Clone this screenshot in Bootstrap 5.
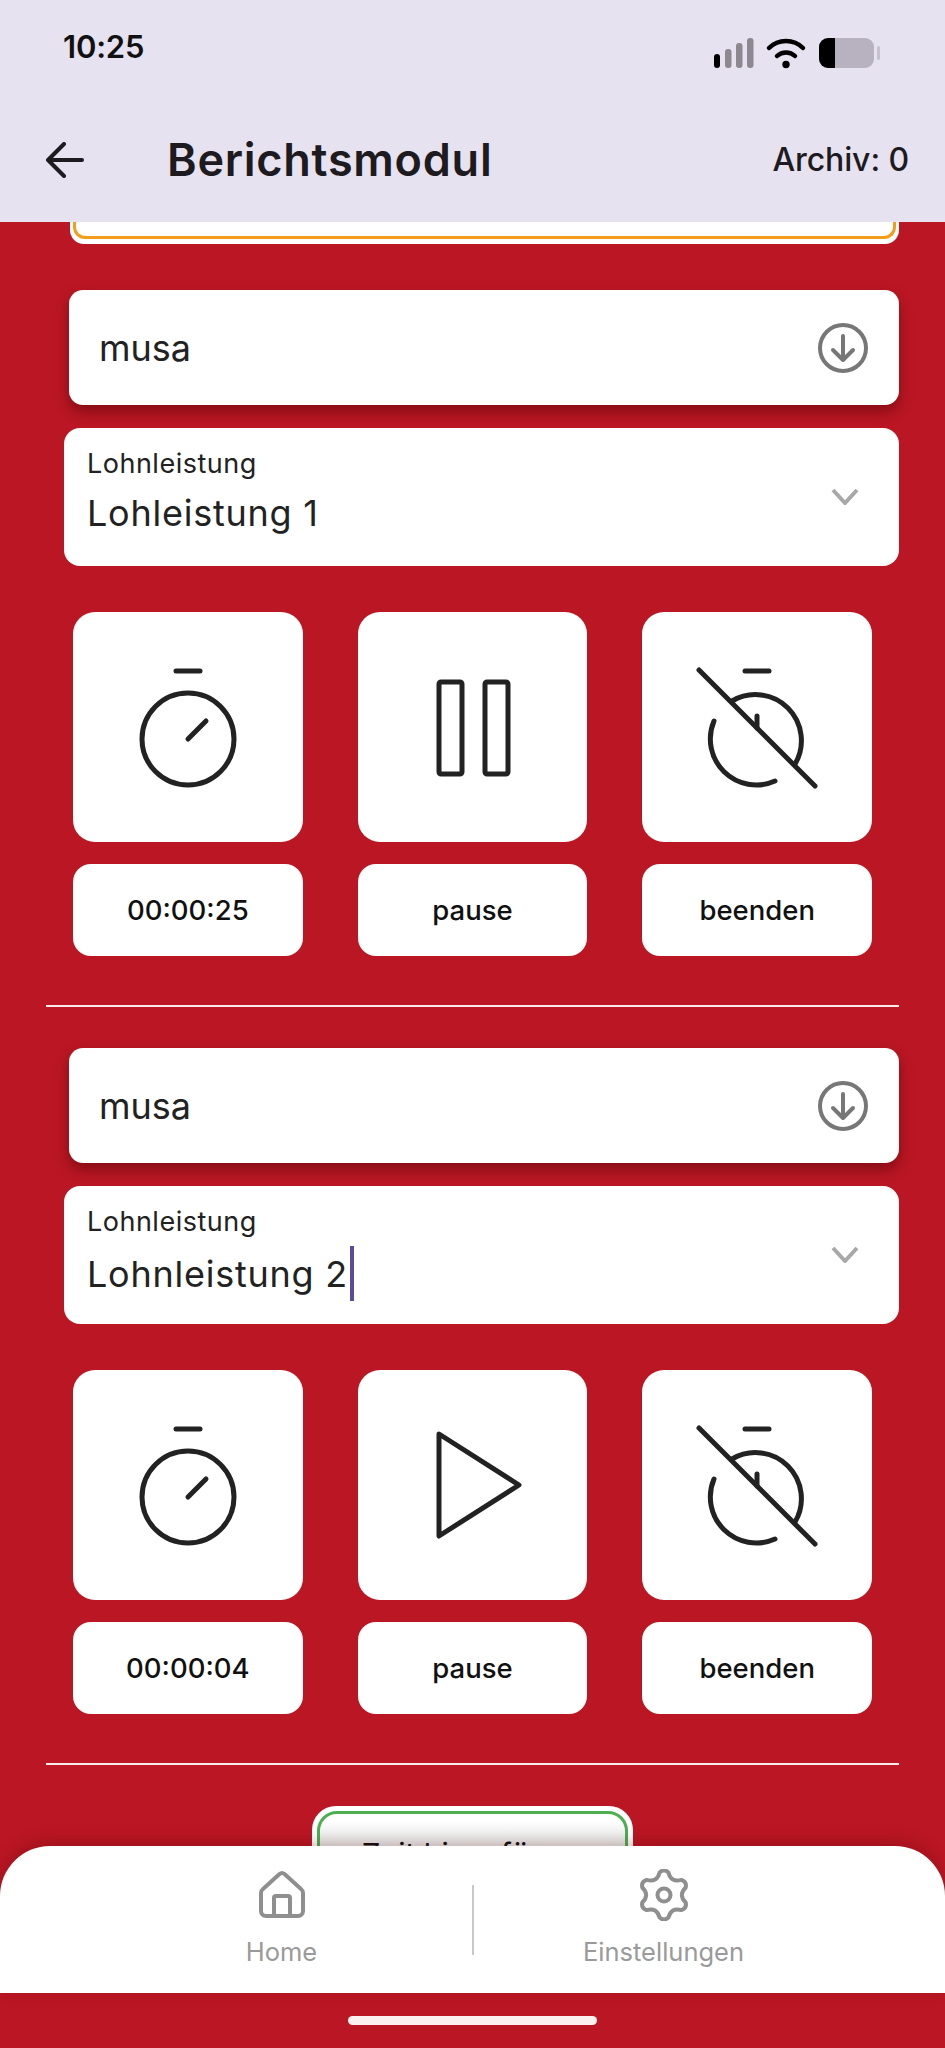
<!DOCTYPE html>
<html lang="de">
<head>
<meta charset="utf-8">
<title>Berichtsmodul</title>
<link href="https://cdn.jsdelivr.net/npm/bootstrap@5.3.0/dist/css/bootstrap.min.css" rel="stylesheet">
<style>
html,body{margin:0;background:#bb1623}
body{font-family:"Inter","Liberation Sans",sans-serif;color:#1d1b20}
.phone{width:945px;height:2048px;background:#bb1623}
.top-area{height:222px;background:#e7e2f0;flex:none}
.status-row{height:78px;padding:0 65px 0 63px}
.status-time{font-size:31px;font-weight:600;color:#111;letter-spacing:-.2px}
.tool-row{height:144px;padding:20px 36px 0 46px}
.back-btn{width:38px;height:36px;margin-right:83px;flex:none}
.page-title{font-size:45px;font-weight:600;letter-spacing:.75px;margin:0}
.archive-text{font-size:32px;font-weight:500;letter-spacing:-.1px}
.main-area{flex:1 1 auto;padding:0 46px;min-height:0;overflow:hidden}
.orange-box{height:22px;margin:0 0 46px 24px;background:#fff;border-radius:0 0 14px 14px;padding:0 3px 5px;}
.orange-inner{height:100%;background:#fff;border:solid #f29d1b;border-width:0 3px 3px;border-radius:0 0 12px 12px}
.person-card{height:115px;margin:0 0 23px 23px;padding:0 30px 0 30px;background:#fff;border-radius:14px;box-shadow:0 7px 14px rgba(60,0,0,.42);font-size:36px;color:#222}
.service-card{height:138px;margin:0 0 46px 18px;padding:22px 32px 0 23px;background:#fff;border-radius:16px;position:relative;color:#222}
.service-label{font-size:27px;line-height:28px;letter-spacing:.5px}
.service-value{font-size:36px;line-height:50px;margin-top:10px;letter-spacing:.75px;display:flex;align-items:center}
.text-caret{width:4px;height:55px;background:#5b4a9e;margin-left:2px;flex:none}
.chev{position:absolute;right:40px;top:60px}
.tile-row{margin:0 27px 22px;gap:55px}
.tile-row.caption-row{margin:0 27px}
.tile-box{flex:1 1 0;height:230px;background:#fff;border-radius:22px;border:0;padding:0}
.label-box{flex:1 1 0;height:92px;background:#fff;border-radius:18px;border:0;padding:2px 0 0;font-size:27.500px;font-weight:500;color:#111}
.rule-line{height:2px;margin:49px 0 41px;background:#fbeaea;opacity:1;border:0}
.add-box{width:321px;height:110px;margin:0 auto;background:#fff;border-radius:24px;padding:5px}
.add-inner{height:100%;border:3px solid #4caf50;border-radius:20px;text-align:center;font-size:30px;padding-top:18px;color:#111;background:linear-gradient(#fff 6px,#e8e8e8 32px);white-space:nowrap}
.bottom-nav{position:absolute;left:0;right:0;top:1846px;height:147px;background:#fff;border-radius:50px 50px 0 0;box-shadow:0 -4px 16px rgba(70,0,0,.25)}
.nav-cell{width:380px;color:#9a9a9a;font-size:25.500px;line-height:30px;padding-top:23px;gap:16px}
.nav-sep{width:2px;height:70px;background:#c8c8c8;margin-top:39px;flex:none}
.home-bar{position:absolute;left:348px;top:2016px;width:249px;height:9px;background:#fdf0f0;border-radius:5px}
.stroke-icon{fill:none;stroke:#222;stroke-width:5;stroke-linecap:round;stroke-linejoin:round}
</style>
</head>
<body>
<div class="phone d-flex flex-column position-relative overflow-hidden">
  <header class="top-area">
    <div class="status-row d-flex align-items-end justify-content-between pb-2">
      <span class="status-time">10:25</span>
      <svg width="170" height="34" viewBox="0 0 170 34" aria-hidden="true">
        <g transform="translate(0,2)">
          <rect x="4" y="16" width="6" height="14" rx="3" fill="#000"/>
          <rect x="15" y="11" width="6.500" height="19" rx="3" fill="#8d8790"/>
          <rect x="26" y="5" width="6.500" height="25" rx="3" fill="#8d8790"/>
          <rect x="37" y="0" width="6.500" height="30" rx="3" fill="#8d8790"/>
          <g fill="none" stroke="#000" stroke-linecap="round">
            <path d="M59 10 a24 24 0 0 1 34 0" stroke-width="4.500"/>
            <path d="M67 18 a13 13 0 0 1 18 0" stroke-width="4.500"/>
          </g>
          <circle cx="76" cy="26.500" r="3.700" fill="#000"/>
          <rect x="109" y="0" width="55" height="30" rx="9" fill="#b8b2c0"/>
          <path d="M125 0 h-7 a9 9 0 0 0 -9 9 v12 a9 9 0 0 0 9 9 h7 z" fill="#000"/>
          <rect x="167" y="8" width="3" height="14" rx="1.500" fill="#c7c1cf"/>
        </g>
      </svg>
    </div>
    <div class="tool-row d-flex align-items-center">
      <svg class="back-btn" viewBox="0 0 38 36" aria-hidden="true"><path d="M36 18H3M18 2 2 18l16 16" fill="none" stroke="#1d1b20" stroke-width="4" stroke-linecap="round" stroke-linejoin="round"/></svg>
      <h1 class="page-title">Berichtsmodul</h1>
      <span class="archive-text ms-auto">Archiv: 0</span>
    </div>
  </header>

  <main class="main-area">
    <div class="orange-box"><div class="orange-inner"></div></div>

    <section>
      <div class="person-card d-flex align-items-center justify-content-between">
        <span>musa</span>
        <svg width="52" height="52" viewBox="0 0 52 52" aria-hidden="true"><circle cx="26" cy="26" r="23" fill="none" stroke="#777" stroke-width="4"/><path d="M26 14v23M16 28l10 10 10-10" fill="none" stroke="#777" stroke-width="4" stroke-linecap="round" stroke-linejoin="round"/></svg>
      </div>
      <div class="service-card">
        <div class="service-label">Lohnleistung</div>
        <div class="service-value">Lohleistung 1</div>
        <svg class="chev" width="28" height="17" viewBox="0 0 28 17" aria-hidden="true"><path d="M2 2l12 13L26 2" fill="none" stroke="#a8a8a8" stroke-width="4"/></svg>
      </div>
      <div class="tile-row d-flex">
        <button class="tile-box d-flex align-items-center justify-content-center" aria-label="Stoppuhr">
          <svg width="120" height="120" viewBox="0 0 120 120" class="stroke-icon overflow-visible" aria-hidden="true"><path d="M48 4h24"/><circle cx="60" cy="72" r="46"/><path d="M60 72l18-18"/></svg>
        </button>
        <button class="tile-box d-flex align-items-center justify-content-center" aria-label="Pause">
          <svg width="120" height="120" viewBox="0 0 120 120" class="stroke-icon overflow-visible" aria-hidden="true"><rect x="26" y="15" width="23" height="92" rx="2"/><rect x="72" y="15" width="23" height="92" rx="2"/></svg>
        </button>
        <button class="tile-box d-flex align-items-center justify-content-center" aria-label="Beenden">
          <svg width="120" height="120" viewBox="0 0 120 120" class="stroke-icon overflow-visible" aria-hidden="true"><path d="M48 4h24"/><path d="M2 3l116 116"/><path d="M35 34A46 46 0 0 1 98 97"/><path d="M17 54A46 46 0 0 0 78 114"/><path d="M60 49v12"/></svg>
        </button>
      </div>
      <div class="tile-row caption-row d-flex">
        <div class="label-box d-flex align-items-center justify-content-center">00:00:25</div>
        <div class="label-box d-flex align-items-center justify-content-center">pause</div>
        <div class="label-box d-flex align-items-center justify-content-center">beenden</div>
      </div>
      <hr class="rule-line">
    </section>

    <section>
      <div class="person-card d-flex align-items-center justify-content-between">
        <span>musa</span>
        <svg width="52" height="52" viewBox="0 0 52 52" aria-hidden="true"><circle cx="26" cy="26" r="23" fill="none" stroke="#777" stroke-width="4"/><path d="M26 14v23M16 28l10 10 10-10" fill="none" stroke="#777" stroke-width="4" stroke-linecap="round" stroke-linejoin="round"/></svg>
      </div>
      <div class="service-card">
        <div class="service-label">Lohnleistung</div>
        <div class="service-value">Lohnleistung 2<span class="text-caret"></span></div>
        <svg class="chev" width="28" height="17" viewBox="0 0 28 17" aria-hidden="true"><path d="M2 2l12 13L26 2" fill="none" stroke="#a8a8a8" stroke-width="4"/></svg>
      </div>
      <div class="tile-row d-flex">
        <button class="tile-box d-flex align-items-center justify-content-center" aria-label="Stoppuhr">
          <svg width="120" height="120" viewBox="0 0 120 120" class="stroke-icon overflow-visible" aria-hidden="true"><path d="M48 4h24"/><circle cx="60" cy="72" r="46"/><path d="M60 72l18-18"/></svg>
        </button>
        <button class="tile-box d-flex align-items-center justify-content-center" aria-label="Start">
          <svg width="120" height="120" viewBox="0 0 120 120" class="stroke-icon overflow-visible" aria-hidden="true"><path d="M26 9l80 51-80 51z"/></svg>
        </button>
        <button class="tile-box d-flex align-items-center justify-content-center" aria-label="Beenden">
          <svg width="120" height="120" viewBox="0 0 120 120" class="stroke-icon overflow-visible" aria-hidden="true"><path d="M48 4h24"/><path d="M2 3l116 116"/><path d="M35 34A46 46 0 0 1 98 97"/><path d="M17 54A46 46 0 0 0 78 114"/><path d="M60 49v12"/></svg>
        </button>
      </div>
      <div class="tile-row caption-row d-flex">
        <div class="label-box d-flex align-items-center justify-content-center">00:00:04</div>
        <div class="label-box d-flex align-items-center justify-content-center">pause</div>
        <div class="label-box d-flex align-items-center justify-content-center">beenden</div>
      </div>
      <hr class="rule-line">
    </section>

    <div class="add-box"><div class="add-inner">Zeit hinzufügen</div></div>
  </main>

  <nav class="bottom-nav d-flex justify-content-center">
    <div class="nav-cell d-flex flex-column align-items-center">
      <svg width="48" height="52" viewBox="0 0 48 52" aria-hidden="true"><path d="M21.500 5a4 4 0 0 1 5 0L43 20a5 5 0 0 1 2 4v18a5 5 0 0 1-5 5H8a5 5 0 0 1-5-5V24a5 5 0 0 1 2-4z" fill="none" stroke="#8f8f8f" stroke-width="4" stroke-linejoin="round"/><path d="M16 47V29a2 2 0 0 1 2-2h12a2 2 0 0 1 2 2v18" fill="none" stroke="#8f8f8f" stroke-width="4"/></svg>
      <span>Home</span>
    </div>
    <div class="nav-sep"></div>
    <div class="nav-cell d-flex flex-column align-items-center">
      <svg width="52" height="52" viewBox="-26 -26 52 52" aria-hidden="true"><path d="M-4.400-22.600Q0-26.500 4.400-22.600Q7-12.100 17.400-15.100Q23-13.200 21.700-7.500Q14 0 21.700 7.500Q23 13.200 17.400 15.100Q7 12.100 4.400 22.600Q0 26.500-4.400 22.600Q-7 12.100-17.400 15.100Q-23 13.200-21.700 7.500Q-14 0-21.700-7.500Q-23-13.200-17.400-15.100Q-7-12.100-4.400-22.600z" fill="none" stroke="#8f8f8f" stroke-width="4" stroke-linejoin="round"/><circle r="6.500" fill="none" stroke="#8f8f8f" stroke-width="4"/></svg>
      <span>Einstellungen</span>
    </div>
  </nav>
  <div class="home-bar"></div>
</div>
<script src="https://cdn.jsdelivr.net/npm/bootstrap@5.3.0/dist/js/bootstrap.bundle.min.js"></script>
</body>
</html>
